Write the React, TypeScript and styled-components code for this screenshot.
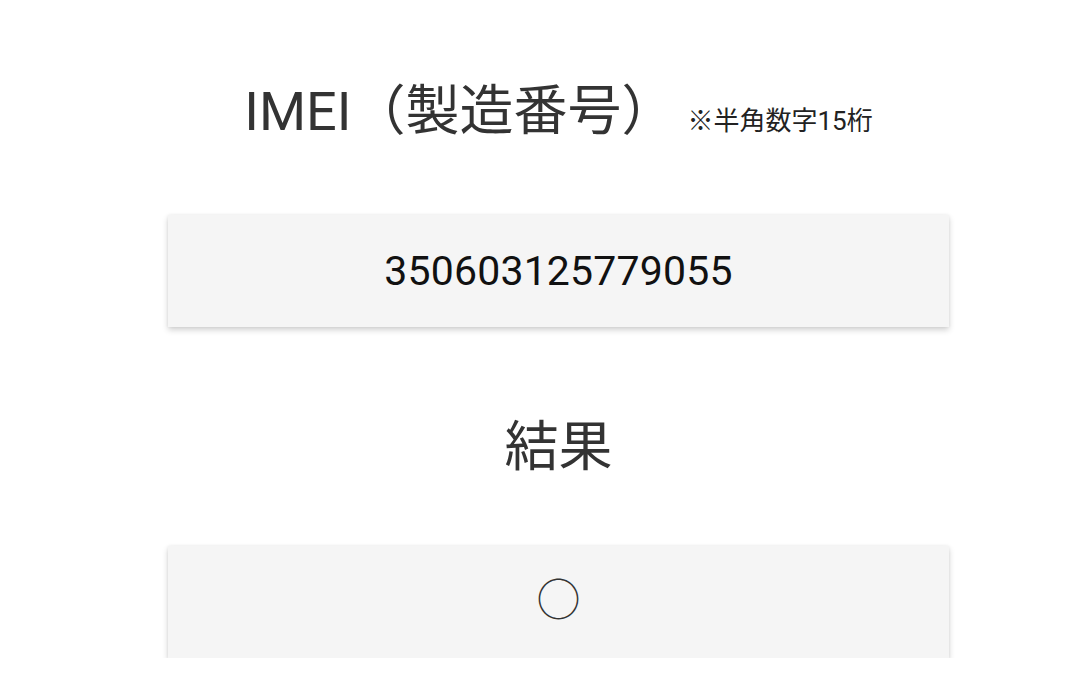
import React from "react";
import styled, { createGlobalStyle } from "styled-components";

const Global = createGlobalStyle`
  html, body { margin: 0; padding: 0; background: #fff; }
  body { font-family: Roboto, "Noto Sans CJK JP", sans-serif; }
`;

const Column = styled.main`
  width: 781px;
  margin-left: 168px;
  display: flex;
  flex-direction: column;
  align-items: stretch;
`;

const Heading = styled.div<{ $top: number; $bottom: number }>`
  display: flex;
  justify-content: center;
  align-items: baseline;
  margin-top: ${(p) => p.$top}px;
  margin-bottom: ${(p) => p.$bottom}px;
  color: #333;
`;

const Title = styled.h1`
  margin: 0;
  font-family: Roboto, "Noto Sans CJK JP", sans-serif;
  font-weight: 400;
  font-size: 54px;
  line-height: 76px;
  letter-spacing: 0;
`;

const Note = styled.span`
  font-family: Roboto, "Noto Sans CJK JP", sans-serif;
  font-size: 26px;
  margin-left: 12px;
  color: #222;
`;

const Field = styled.div`
  height: 112px;
  background: #f5f5f5;
  box-shadow: 0 3px 6px rgba(0, 0, 0, 0.18), 0 0 3px rgba(0, 0, 0, 0.06);
  display: flex;
  align-items: center;
  justify-content: center;
`;

const Value = styled.span`
  font-family: Roboto, sans-serif;
  font-size: 41px;
  color: #111;
  letter-spacing: 0.2px;
`;

const Mark = styled.span`
  font-family: "Noto Sans CJK JP", sans-serif;
  font-size: 44px;
  font-weight: 300;
  color: #333;
  line-height: 1;
  margin-bottom: 10px;
`;

export default function App() {
  return (
    <>
      <Global />
      <Column>
        <Heading $top={74} $bottom={65}>
          <Title>IMEI（製造番号）</Title>
          <Note>※半角数字15桁</Note>
        </Heading>
        <Field>
          <Value>350603125779055</Value>
        </Field>
        <Heading $top={83} $bottom={60}>
          <Title>結果</Title>
        </Heading>
        <Field>
          <Mark>○</Mark>
        </Field>
      </Column>
    </>
  );
}
